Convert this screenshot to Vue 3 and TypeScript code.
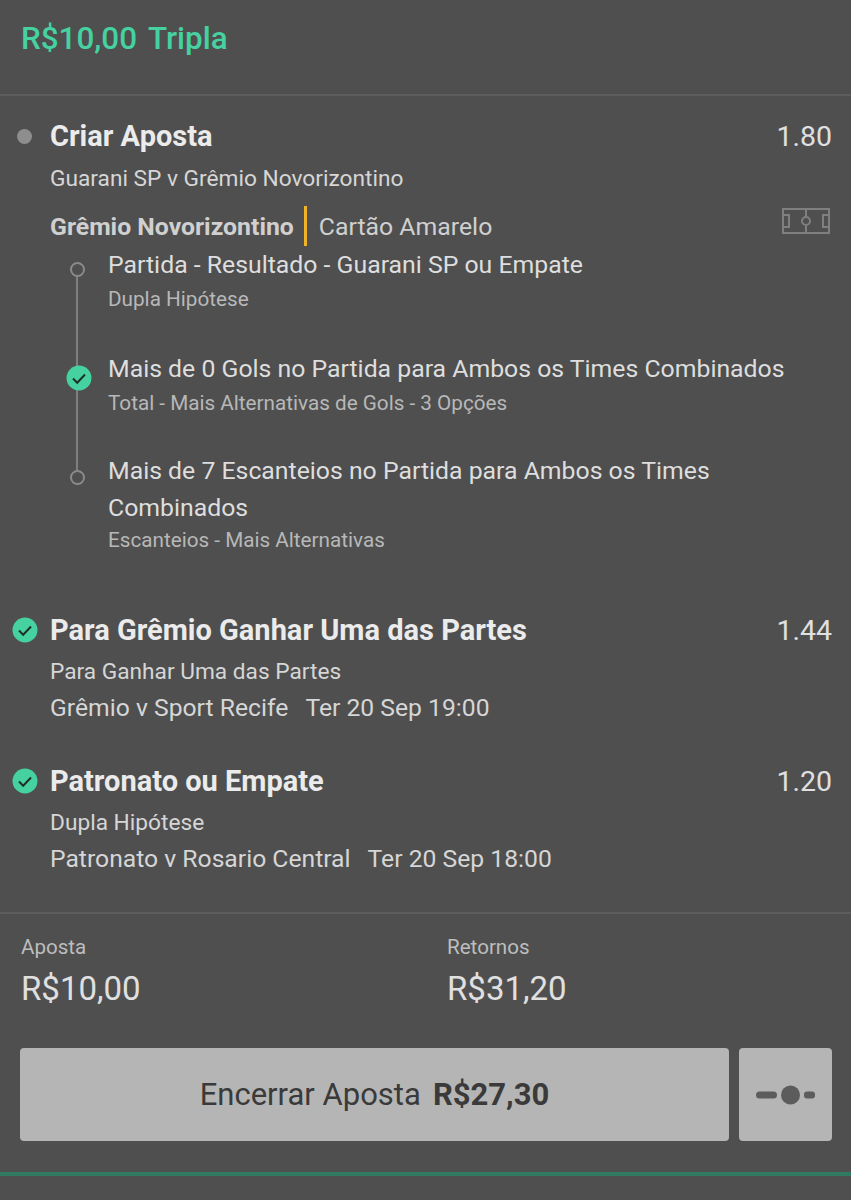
<script setup lang="ts">
interface Selection {
  title: string
  market: string
  state: 'open' | 'won'
}

interface Leg {
  title: string
  odds: string
  market: string
  teams: string
  time: string
}

const selections: Selection[] = [
  { title: 'Partida - Resultado - Guarani SP ou Empate', market: 'Dupla Hipótese', state: 'open' },
  { title: 'Mais de 0 Gols no Partida para Ambos os Times Combinados', market: 'Total - Mais Alternativas de Gols - 3 Opções', state: 'won' },
  { title: 'Mais de 7 Escanteios no Partida para Ambos os Times Combinados', market: 'Escanteios - Mais Alternativas', state: 'open' },
]

const legs: Leg[] = [
  { title: 'Para Grêmio Ganhar Uma das Partes', odds: '1.44', market: 'Para Ganhar Uma das Partes', teams: 'Grêmio v Sport Recife', time: 'Ter 20 Sep 19:00' },
  { title: 'Patronato ou Empate', odds: '1.20', market: 'Dupla Hipótese', teams: 'Patronato v Rosario Central', time: 'Ter 20 Sep 18:00' },
]
</script>

<template>
  <div class="slip">
    <header class="slip__header"><span>R$10,00</span><span>Tripla</span></header>

    <section class="slip__body">
      <div class="leg leg--builder">
        <div class="leg__head">
          <span class="leg__dot"><i class="dot" /></span>
          <h2 class="leg__title">Criar Aposta</h2>
          <span class="leg__odds">1.80</span>
        </div>
        <p class="leg__line">Guarani SP v Grêmio Novorizontino</p>
        <div class="stat">
          <strong class="stat__team">Grêmio Novorizontino</strong>
          <span class="stat__bar" />
          <span class="stat__name">Cartão Amarelo</span>
          <svg class="stat__pitch" width="48" height="26" viewBox="0 0 48 26" fill="none" stroke="#7f7f7f" stroke-width="2">
            <rect x="1" y="1" width="46" height="24" />
            <path d="M24 1v24M1 7h6v12H1M47 7h-6v12h6" />
            <circle cx="24" cy="13" r="4" fill="#4f4f4f" />
          </svg>
        </div>

        <ul class="steps">
          <li v-for="s in selections" :key="s.title" class="step">
            <span class="step__mark">
              <svg v-if="s.state === 'won'" class="step__check" width="26" height="26" viewBox="0 0 26 26">
                <circle cx="13" cy="13" r="12.5" fill="#45d2a0" />
                <path d="M7 13.5l4.2 4.2L19 9.5" fill="none" stroke="#20302b" stroke-width="2" />
              </svg>
              <i v-else class="step__ring" />
            </span>
            <div>
              <div class="step__title">{{ s.title }}</div>
              <div class="step__market">{{ s.market }}</div>
            </div>
          </li>
        </ul>
      </div>

      <div v-for="leg in legs" :key="leg.title" class="leg">
        <div class="leg__head">
          <span class="leg__dot">
            <svg width="26" height="26" viewBox="0 0 26 26">
              <circle cx="13" cy="13" r="12.5" fill="#45d2a0" />
              <path d="M7 13.5l4.2 4.2L19 9.5" fill="none" stroke="#20302b" stroke-width="2" />
            </svg>
          </span>
          <h2 class="leg__title">{{ leg.title }}</h2>
          <span class="leg__odds">{{ leg.odds }}</span>
        </div>
        <p class="leg__line">{{ leg.market }}</p>
        <p class="leg__line leg__line--teams">
          <span>{{ leg.teams }}</span><span>{{ leg.time }}</span>
        </p>
      </div>
    </section>

    <section class="slip__footer">
      <div class="totals">
        <div class="total">
          <div class="total__label">Aposta</div>
          <div class="total__value">R$10,00</div>
        </div>
        <div class="total">
          <div class="total__label">Retornos</div>
          <div class="total__value">R$31,20</div>
        </div>
      </div>
      <div class="actions">
        <button class="btn btn--cashout" type="button">
          <span>Encerrar Aposta</span><b>R$27,30</b>
        </button>
        <button class="btn btn--slider" type="button" aria-label="Ajustar">
          <svg width="60" height="22" viewBox="0 0 60 22" fill="#5c5c5c">
            <rect x="0" y="7.5" width="21" height="7" rx="3.5" />
            <circle cx="34.5" cy="11" r="9.5" />
            <rect x="48" y="7.5" width="11" height="7" rx="3" />
          </svg>
        </button>
      </div>
    </section>

    <div class="slip__rule" />
  </div>
</template>

<style>
html, body { background: #4f4f4f; }
</style>

<style scoped>
*, *::before, *::after { box-sizing: border-box; }

.slip {
  width: 851px;
  height: 1200px;
  overflow: hidden;
  background: #4f4f4f;
  color: #e6e6e6;
  font-family: Roboto, "Liberation Sans", sans-serif;
}

.slip__header {
  display: flex;
  gap: 11px;
  height: 96px;
  padding: 20px 21px 0;
  border-bottom: 2px solid #5c5c5c;
  color: #45d2a0;
  font-size: 31.4px;
  line-height: 38px;
  font-weight: 500;
}

.slip__body { padding-top: 22px; height: 816px; }

/* LEGS */
.leg { padding: 0 19px 0 0; margin-bottom: 41px; }
.leg--builder { margin-bottom: 58px; }

.leg__head { display: flex; align-items: center; height: 36px; }
.leg__dot { width: 50px; display: flex; justify-content: center; flex: none; }
.dot { width: 15px; height: 15px; border-radius: 50%; background: #8e8e8e; display: block; margin-right: 2px; }
.leg__title { margin: 0; flex: 1; font-size: 29px; line-height: 36px; font-weight: 700; color: #ebebeb; }
.leg__odds { font-size: 28.5px; color: #e0e0e0; }

.leg__line { margin: 10px 0 0 50px; font-size: 22.7px; line-height: 28px; color: #d6d6d6; }
.leg--builder .leg__line { margin-top: 11px; }
.leg__line--teams { display: flex; gap: 17px; font-size: 24.7px; margin-top: 8px; }

/* STAT */
.stat { display: flex; align-items: center; height: 40px; margin: 13px 0 0 50px; font-size: 24.8px; color: #d0d0d0; }
.stat__team { font-weight: 700; }
.stat__bar { width: 3px; height: 40px; background: #f0b429; margin: 0 12px 0 10px; }
.stat__name { flex: 1; }
.stat__pitch { margin: -10px 2px 0 0; }

/* SELECTIONS */
.steps { list-style: none; margin: 0; padding: 0; position: relative; }
.steps::before {
  content: "";
  position: absolute;
  left: 76px;
  top: 29px;
  height: 200px;
  width: 2px;
  background: #7f7f7f;
}

.step { display: flex; padding-left: 108px; position: relative; margin-bottom: 37px; }
.step:nth-child(2) { margin-bottom: 35px; }
.step:last-child { margin-bottom: 0; }
.step__mark { position: absolute; left: 70px; top: 16px; }
.step:nth-child(2) .step__mark { left: 66px; top: 15px; }
.step:nth-child(3) .step__mark { top: 18px; }
.step__ring {
  display: block;
  width: 15px;
  height: 15px;
  border: 2px solid #8a8a8a;
  border-radius: 50%;
  background: #4f4f4f;
}
.step__check { display: block; }
.step__title { font-size: 24.8px; line-height: 37px; color: #dedede; }
.step__market { font-size: 20.7px; line-height: 28px; color: #b8b8b8; margin-top: 2px; }
.step:last-child .step__market { margin-top: 0; }

/* FOOTER */
.slip__footer { border-top: 2px solid #5c5c5c; padding: 16px 19px 0 20px; }
.totals { display: flex; }
.total { flex: none; width: 426px; padding-left: 1px; }
.total__label { font-size: 20.6px; line-height: 34px; color: #bdbdbd; }
.total__value { font-size: 33px; line-height: 42px; color: #e0e0e0; margin-top: 4px; }

.actions { display: flex; gap: 10px; margin-top: 38px; }
.btn {
  height: 93px;
  border: 0;
  border-radius: 4px;
  background: #b5b5b5;
  color: #3a3a3a;
  font-family: inherit;
  display: flex;
  align-items: center;
  justify-content: center;
  padding: 0;
}
.btn--cashout { flex: none; width: 709px; font-size: 31px; gap: 12px; }
.btn--cashout b { font-weight: 700; }
.btn--slider { flex: none; width: 93px; }

.slip__rule { height: 4px; background: #2f7a60; margin-top: 31px; }
</style>
